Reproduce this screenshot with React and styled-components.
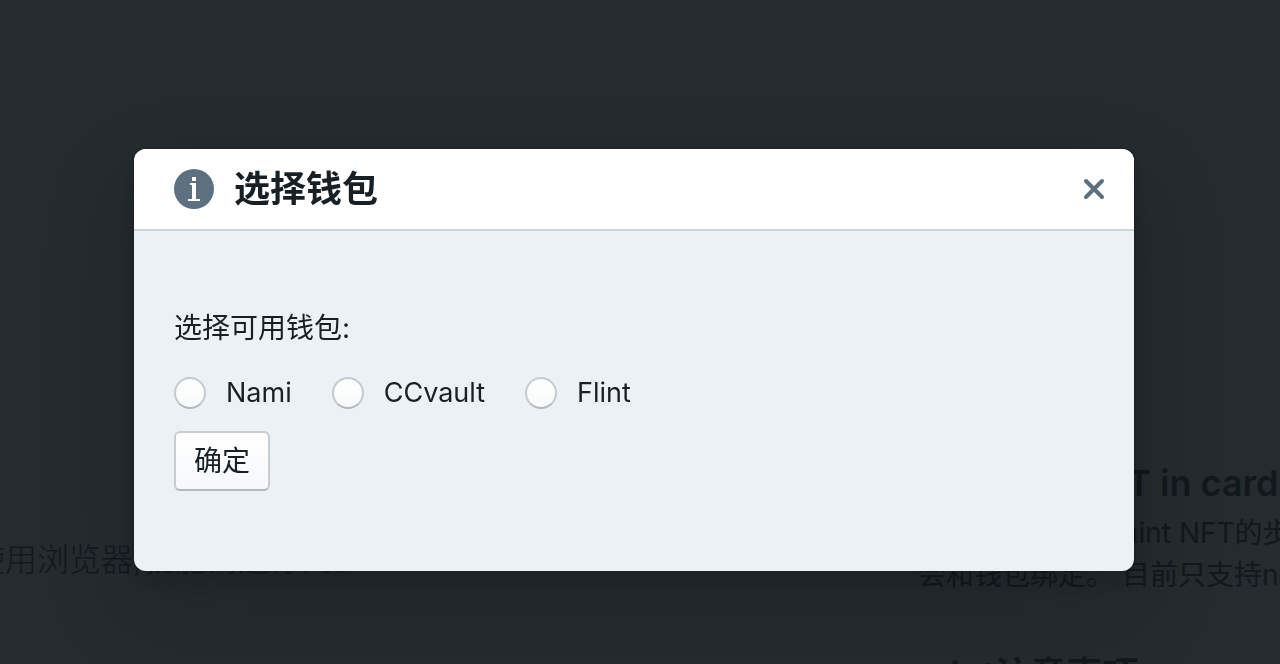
import React from "react";
import styled, { createGlobalStyle } from "styled-components";

const GlobalStyle = createGlobalStyle`
  * { box-sizing: border-box; }
  body {
    margin: 0;
    overflow: hidden;
    background: #252b2e;
    color: #182026;
    font-family: Inter, "Noto Sans CJK SC", sans-serif;
    font-size: 28px;
    line-height: 42px;
  }
  h1, h2, p { margin: 0; }
`;

const Page = styled.main`
  display: grid;
  grid-template-columns: minmax(0, 1fr) 362px;
  height: 100vh;
  overflow: hidden;
  color: #12181b;
`;

const Intro = styled.section`
  display: flex;
  padding-top: 536px;
  overflow: hidden;
`;

const Slogan = styled.p`
  margin-left: -27px;
  font-size: 32px;
  font-weight: 200;
  line-height: 48px;
  white-space: nowrap;
`;

const Guide = styled.section`
  padding-top: 462px;
  overflow: hidden;
  white-space: nowrap;
`;

const GuideTitle = styled.h2`
  margin-bottom: 8px;
  font-size: 36px;
  font-weight: 600;
  line-height: 42px;
`;

const GuideText = styled.p`
  margin-bottom: 58px;
`;

const Overlay = styled.div`
  position: fixed;
  inset: 0;
  display: flex;
  align-items: center;
  justify-content: center;
  padding: 56px 12px 0 0;
`;

const Dialog = styled.section`
  width: 80%;
  max-width: 1000px;
  border-radius: 12px;
  background: #ebf1f5;
  overflow: hidden;
  box-shadow: 0 0 0 2px rgba(16, 22, 26, 0.1), 0 8px 16px rgba(16, 22, 26, 0.2),
    0 36px 92px rgba(16, 22, 26, 0.2);
`;

const Header = styled.header`
  display: flex;
  align-items: center;
  gap: 20px;
  height: 82px;
  padding: 0 20px 0 40px;
  border-bottom: 2px solid #ced3d6;
  background: #fff;
  color: #5c7080;
`;

const Title = styled.h1`
  flex: 1;
  color: #182026;
  font-size: 36px;
  font-weight: 600;
  line-height: 46px;
`;

const CloseButton = styled.button`
  display: flex;
  align-items: center;
  justify-content: center;
  width: 40px;
  height: 40px;
  padding: 0;
  border: 0;
  background: none;
  color: inherit;
`;

const Form = styled.form`
  display: flex;
  flex-direction: column;
  align-items: flex-start;
  padding: 76px 40px 80px;
`;

const Wallets = styled.fieldset`
  display: flex;
  flex-wrap: wrap;
  column-gap: 40px;
  margin: 0 0 20px;
  padding: 0;
  border: 0;
`;

const Legend = styled.legend`
  margin-bottom: 26px;
  padding: 0;
`;

const Option = styled.label`
  display: flex;
  align-items: center;
  gap: 20px;
  font-size: 27px;
  line-height: 36px;
`;

const Radio = styled.input`
  appearance: none;
  width: 32px;
  height: 32px;
  margin: 0;
  border: 2px solid #c5cacd;
  border-bottom-color: #b3b8bb;
  border-radius: 50%;
  background: linear-gradient(#fff, #f7f9fa) padding-box;

  &:checked {
    border-color: #137cbd;
    background: radial-gradient(#fff 6px, #137cbd 7px);
  }
`;

const SubmitButton = styled.button`
  height: 60px;
  padding: 0 18px;
  border: 2px solid #c9cdd0;
  border-bottom-color: #b3b8bb;
  border-radius: 6px;
  background: linear-gradient(#fff, #f6f8fa) padding-box;
  color: #182026;
  font: inherit;
`;

const wallets = ["Nami", "CCvault", "Flint"];

function InfoIcon() {
  return (
    <svg width="40" height="40" viewBox="0 0 20 20" fill="currentColor" aria-hidden="true">
      <path
        fillRule="evenodd"
        d="M10 0a10 10 0 1 0 0 20 10 10 0 0 0 0-20zM9 4h2v2H9V4zm4 12H7v-1h2V8H8V7h3v8h2v1z"
      />
    </svg>
  );
}

function CloseIcon() {
  return (
    <svg width="40" height="40" viewBox="0 0 40 40" aria-hidden="true">
      <path
        d="M12 12l16 16M28 12L12 28"
        fill="none"
        stroke="currentColor"
        strokeWidth="4"
        strokeLinecap="round"
      />
    </svg>
  );
}

export default function App() {
  return (
    <>
      <GlobalStyle />
      <Page>
        <Intro>
          <Slogan>使用浏览器,就能铸造你的。</Slogan>
        </Intro>
        <Guide>
          <GuideTitle>Mint one NFT in cardano</GuideTitle>
          <GuideText>
            以下就是您可以mint NFT的步骤
            <br />
            会和钱包绑定。 目前只支持nami
          </GuideText>
          <GuideTitle>mint注意事项</GuideTitle>
        </Guide>
      </Page>
      <Overlay>
        <Dialog role="dialog" aria-modal="true" aria-labelledby="wallet-title">
          <Header>
            <InfoIcon />
            <Title id="wallet-title">选择钱包</Title>
            <CloseButton type="button" aria-label="Close">
              <CloseIcon />
            </CloseButton>
          </Header>
          <Form onSubmit={(event) => event.preventDefault()}>
            <Wallets>
              <Legend>选择可用钱包:</Legend>
              {wallets.map((name) => (
                <Option key={name}>
                  <Radio type="radio" name="wallet" value={name} />
                  {name}
                </Option>
              ))}
            </Wallets>
            <SubmitButton type="submit">确定</SubmitButton>
          </Form>
        </Dialog>
      </Overlay>
    </>
  );
}
